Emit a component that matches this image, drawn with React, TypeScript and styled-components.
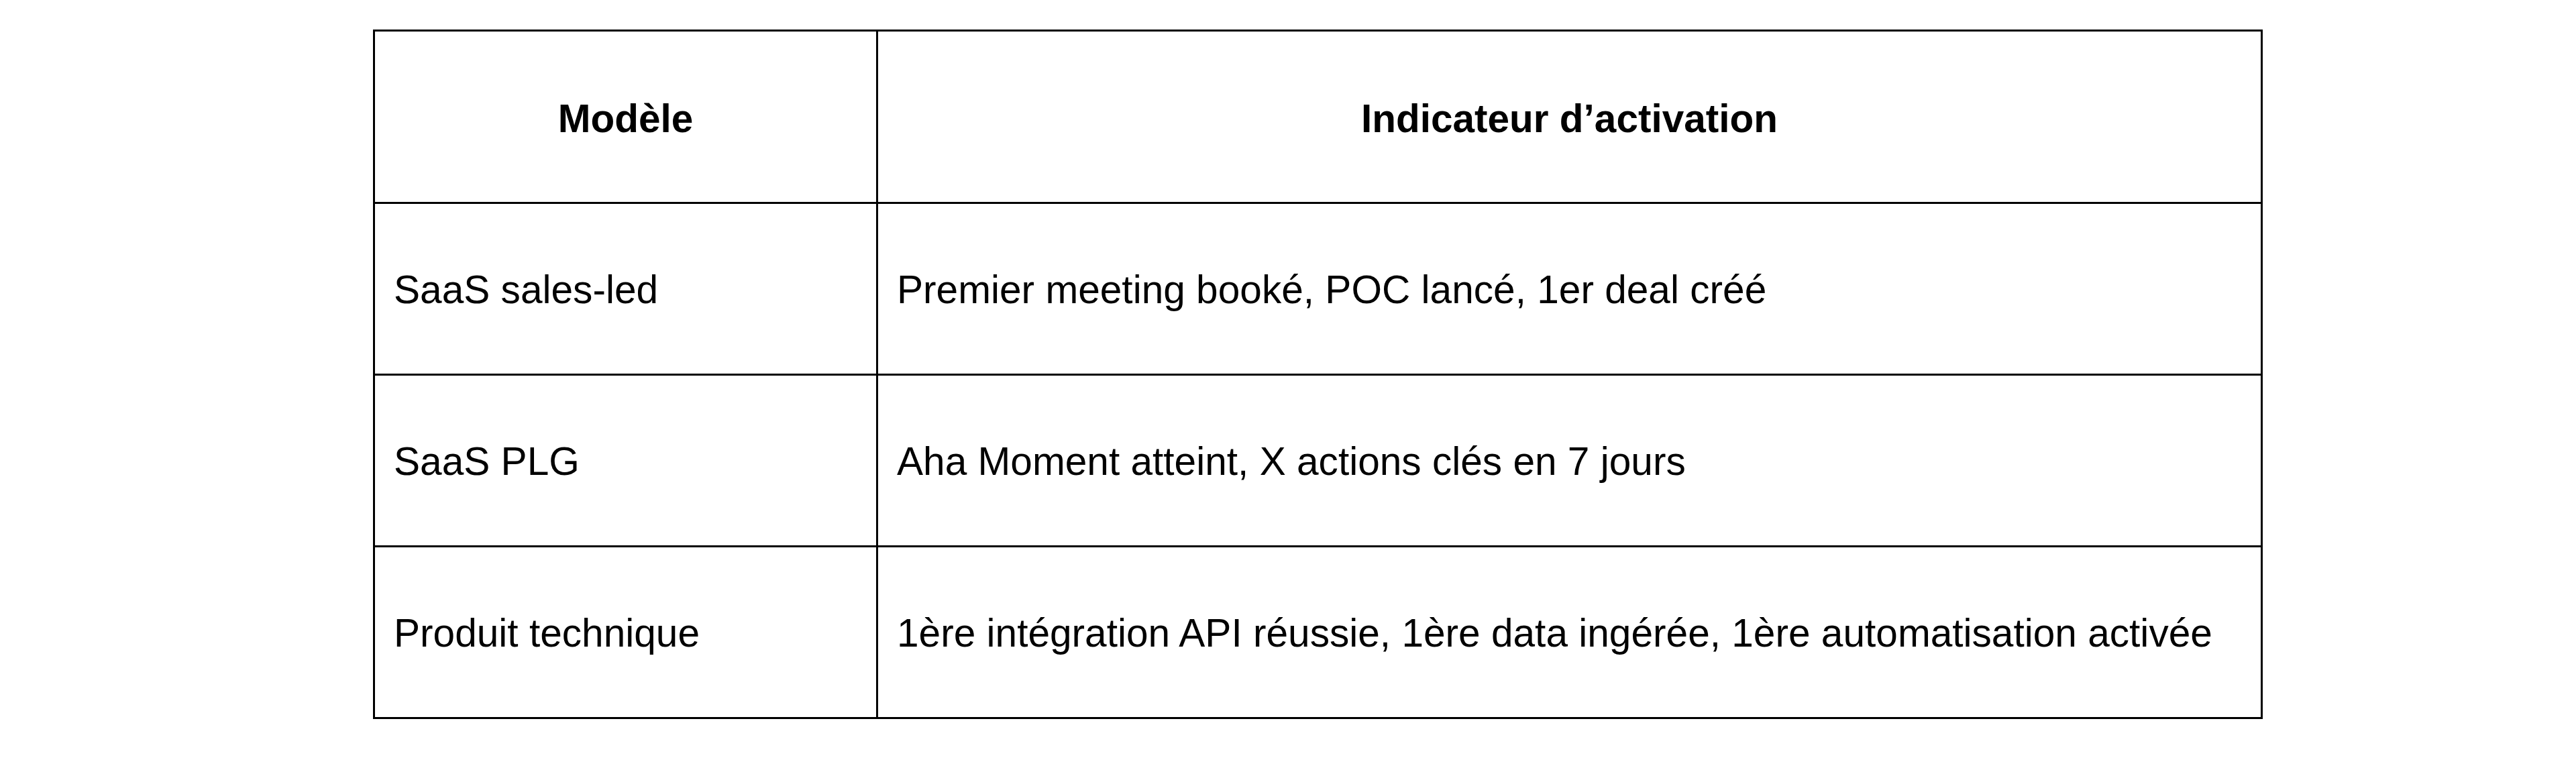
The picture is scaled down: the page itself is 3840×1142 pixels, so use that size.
import styled, { createGlobalStyle } from "styled-components";

const GlobalStyle = createGlobalStyle`
  html, body {
    margin: 0;
    padding: 0;
    background: #fff;
  }
  body {
    font-family: "Liberation Sans", Arial, Helvetica, sans-serif;
    color: #000;
  }
`;

const Page = styled.div`
  padding: 44px 0 0 556px;
`;

const Table = styled.table`
  border-collapse: collapse;
  width: 2817px;
  table-layout: fixed;
  border: 3px solid #000;
`;

const HeadCell = styled.th`
  border: 3px solid #000;
  height: 250px;
  padding: 4px 24px 0;
  font-size: 58.5px;
  font-weight: 700;
  text-align: center;
  vertical-align: middle;
`;

const Cell = styled.td`
  border: 3px solid #000;
  height: 251px;
  padding: 2px 24px 0 28px;
  font-size: 58.6px;
  font-weight: 400;
  text-align: left;
  vertical-align: middle;
  white-space: nowrap;
`;

const rows = [
  { model: "SaaS sales-led", indicator: "Premier meeting booké, POC lancé, 1er deal créé" },
  { model: "SaaS PLG", indicator: "Aha Moment atteint, X actions clés en 7 jours" },
  {
    model: "Produit technique",
    indicator:
      "1ère intégration API réussie, 1ère data ingérée, 1ère automatisation activée",
  },
];

export default function App() {
  return (
    <>
      <GlobalStyle />
      <Page>
        <Table>
          <colgroup>
            <col style={{ width: 750 }} />
            <col />
          </colgroup>
          <thead>
            <tr>
              <HeadCell>Modèle</HeadCell>
              <HeadCell>Indicateur d’activation</HeadCell>
            </tr>
          </thead>
          <tbody>
            {rows.map((row) => (
              <tr key={row.model}>
                <Cell>{row.model}</Cell>
                <Cell>{row.indicator}</Cell>
              </tr>
            ))}
          </tbody>
        </Table>
      </Page>
    </>
  );
}
